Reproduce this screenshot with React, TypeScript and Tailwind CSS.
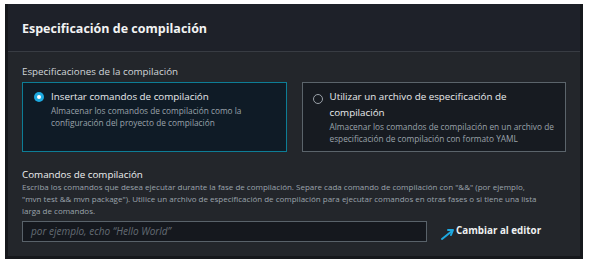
export default function App() {
  return (
    <div className="w-[591px] h-[268px] bg-white pt-[4px] pl-[5px] font-['Open_Sans',sans-serif]">
      <div className="w-[578px] h-[255px] bg-[#23262b] border-x-[3px] border-b-[3px] border-[#16181c] flex flex-col">
        <div className="h-[48px] bg-[#1e2129] border-b border-[#383c43] flex items-center px-[14px]">
          <h1 className="text-[12.5px] font-bold text-[#f2f3f3] leading-none mt-[4px]">Especificación de compilación</h1>
        </div>

        <div className="px-[14px] pt-[13px]">
          <div className="text-[9.8px] text-[#d1d5d9] leading-[14px]">Especificaciones de la compilación</div>

          <div className="grid grid-cols-2 gap-[15px] mt-[3px]">
            <div className="h-[70px] border border-[#0d7d96] bg-[#0f1b26] pl-[11px] pr-[10px] pt-[6px] flex gap-[7px]">
              <div className="mt-[3px] w-[10px] h-[10px] rounded-full bg-[#1da9df] flex items-center justify-center shrink-0">
                <div className="w-[4px] h-[4px] rounded-full bg-white" />
              </div>
              <div>
                <div className="text-[9.8px] text-[#e9ebed] leading-[16px]">Insertar comandos de compilación</div>
                <div className="text-[8.3px] text-[#9ba3ab] leading-[12px]">
                  Almacenar los comandos de compilación como la configuración del proyecto de compilación
                </div>
              </div>
            </div>

            <div className="h-[70px] border border-[#5b646b] bg-[#171b21] pl-[10px] pr-[10px] pt-[6px] flex gap-[7px]">
              <div className="mt-[5px] w-[10px] h-[10px] rounded-full border border-[#9aa1a8] shrink-0" />
              <div>
                <div className="text-[9.8px] text-[#e9ebed] leading-[16px]">Utilizar un archivo de especificación de compilación</div>
                <div className="text-[8.3px] text-[#9ba3ab] leading-[12px]">
                  Almacenar los comandos de compilación en un archivo de especificación de compilación con formato YAML
                </div>
              </div>
            </div>
          </div>

          <div className="mt-[17px]">
            <div className="text-[9.8px] text-[#eef0f1] leading-[12px]">Comandos de compilación</div>
            <p className="text-[8px] text-[#9ba3ab] leading-[12px]">
              Escriba los comandos que desea ejecutar durante la fase de compilación. Separe cada comando de compilación con "&&" (por ejemplo,
              <br />
              "mvn test && mvn package"). Utilice un archivo de especificación de compilación para ejecutar comandos en otras fases o si tiene una lista
              <br />
              larga de comandos.
            </p>
            <div className="flex items-center mt-[4px]">
              <div className="w-[405px] h-[21px] border border-[#59626a] bg-[#15181e] flex items-center px-[8px]">
                <span className="text-[10px] italic text-[#646c74]">por ejemplo, echo “Hello World”</span>
              </div>
              <div className="flex items-center ml-[14px]">
                <svg width="14" height="14" viewBox="0 0 14 14" className="mt-[4px]">
                  <path d="M1 12 L11 4" stroke="#1ea8e0" strokeWidth="2" strokeLinecap="round" fill="none" />
                  <path d="M7 3 L12 3 L10 8" stroke="#1ea8e0" strokeWidth="2" strokeLinecap="round" strokeLinejoin="round" fill="none" />
                </svg>
                <span className="text-[9.8px] font-bold text-[#eef0f1] ml-[1px]">Cambiar al editor</span>
              </div>
            </div>
          </div>
        </div>
      </div>
    </div>
  );
}
